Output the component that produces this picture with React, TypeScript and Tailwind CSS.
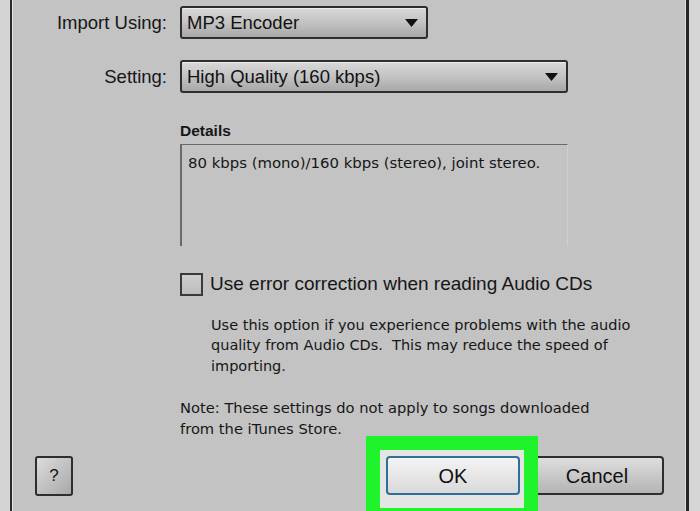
import React from 'react'

const font = { fontFamily: '"Liberation Sans", Arial, sans-serif' }
const tahoma = { fontFamily: '"DejaVu Sans", Verdana, sans-serif' }

function Caret() {
  return (
    <svg width="13" height="8" viewBox="0 0 13 8" className="shrink-0">
      <path d="M0 0 H13 L6.5 8 Z" fill="#111" />
    </svg>
  )
}

function Dropdown({ value, width }: { value: string; width: string }) {
  return (
    <div className={`${width} h-[33px] flex items-center justify-between pl-[5px] pr-[8px] rounded-[3px] border-2 border-[#2e2e2e] bg-gradient-to-b from-[#d8d8d8] via-[#c3c3c3] to-[#a8a8a8] text-[18.5px] text-[#111] shadow-[inset_0_1px_0_#ececec]`}>
      <span>{value}</span>
      <Caret />
    </div>
  )
}

export default function App() {
  return (
    <div className="w-[700px] h-[511px] flex bg-[#d3d3d3] overflow-hidden relative" style={font}>
      <div className="w-[10px] bg-[#d4d4d4]" />
      <div className="w-[2px] bg-[#2b2b2b]" />
      <div className="w-[1px] bg-[#e2e2e2]" />

      <div className="flex-1 bg-[#c3c3c3] flex flex-col text-[#161616]">
        {/* selects */}
        <div className="grid grid-cols-[154px_1fr] gap-x-[13px] gap-y-[21px] items-center mt-[6px]">
          <div className="text-right text-[18.5px]">Import Using:</div>
          <Dropdown value="MP3 Encoder" width="w-[248px]" />
          <div className="text-right text-[18.5px]">Setting:</div>
          <Dropdown value="High Quality (160 kbps)" width="w-[388px]" />
        </div>

        {/* details */}
        <div className="ml-[167px] mt-[28px]">
          <div className="text-[15.5px] font-bold leading-[20px]">Details</div>
          <div className="mt-[3px] w-[388px] h-[102px] border-l-2 border-t border-[#6a6a6a] border-r border-r-[#cfcfcf] pt-[8px] pl-[6px] text-[14.9px] leading-[20px]" style={tahoma}>
            80 kbps (mono)/160 kbps (stereo), joint stereo.
          </div>
        </div>

        {/* checkbox */}
        <div className="ml-[167px] mt-[24px] flex items-center gap-[7px]">
          <div className="w-[23px] h-[23px] border-2 border-[#3a3a3a] bg-gradient-to-b from-[#cfcfcf] to-[#bdbdbd]" />
          <span className="text-[19px]">Use error correction when reading Audio CDs</span>
        </div>
        <div className="ml-[198px] mt-[16px] text-[14.5px] leading-[20.5px] whitespace-nowrap" style={tahoma}>
          Use this option if you experience problems with the audio<br />
          quality from Audio CDs.&nbsp; This may reduce the speed of<br />
          importing.
        </div>

        <div className="ml-[167px] mt-[21px] text-[14.7px] leading-[21px] whitespace-nowrap" style={tahoma}>
          Note: These settings do not apply to songs downloaded<br />
          from the iTunes Store.
        </div>

        {/* buttons */}
        <div className="flex items-start mt-[17px]">
          <button className="ml-[22px] w-[38px] h-[40px] rounded-[3px] border-2 border-[#2e2e2e] bg-gradient-to-br from-[#dcdcdc] to-[#a9a9a9] text-[17px] text-[#111]">?</button>
          <button className="relative z-10 ml-[313px] w-[134px] h-[39px] rounded-[4px] border-2 border-[#2f6f9c] bg-gradient-to-b from-[#f4f4f4] to-[#d9d9d9] text-[20px] text-[#111]">OK</button>
          <button className="ml-[10px] w-[134px] h-[39px] rounded-[4px] border-2 border-[#2e2e2e] bg-gradient-to-b from-[#dedede] to-[#b4b4b4] text-[20px] text-[#111]">Cancel</button>
        </div>
      </div>

      <div className="w-[1px] bg-[#dcdcdc]" />
      <div className="w-[3px] bg-[#262626]" />
      <div className="w-[11px] bg-[#d6d6d6]" />

      {/* highlight around OK: light fill behind the button, green frame on top */}
      <div className="absolute left-[380px] top-[450px] w-[144px] h-[61px] bg-[#e4e6e4]" />
      <div className="absolute z-20 pointer-events-none left-[366px] top-[436px] w-[172px] h-[75px] border-[14px] border-b-[3px] border-[#1ff32c]" />
    </div>
  )
}
